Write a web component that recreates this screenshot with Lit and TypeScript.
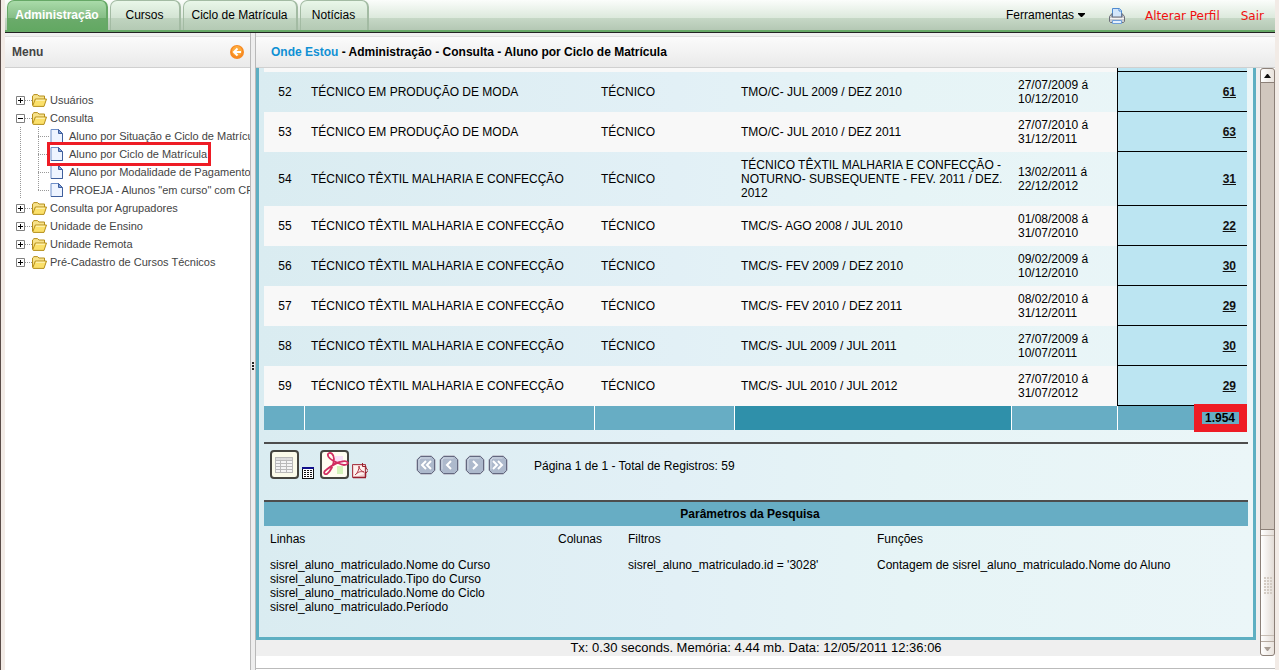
import { LitElement, html, svg, css } from "lit";
import { customElement, property } from "lit/decorators.js";
import { classMap } from "lit/directives/class-map.js";

interface Row {
  n: number;
  curso: string;
  tipo: string;
  ciclo: string;
  de: string;
  ate: string;
  total: number;
}

const MODA = "TÉCNICO EM PRODUÇÃO DE MODA";
const TEXTIL = "TÉCNICO TÊXTIL MALHARIA E CONFECÇÃO";
const T = "TÉCNICO";

const ROWS: Row[] = [
  { n: 52, curso: MODA, tipo: T, ciclo: "TMO/C- JUL 2009 / DEZ 2010", de: "27/07/2009", ate: "10/12/2010", total: 61 },
  { n: 53, curso: MODA, tipo: T, ciclo: "TMO/C- JUL 2010 / DEZ 2011", de: "27/07/2010", ate: "31/12/2011", total: 63 },
  { n: 54, curso: TEXTIL, tipo: T, ciclo: "TÉCNICO TÊXTIL MALHARIA E CONFECÇÃO - NOTURNO- SUBSEQUENTE - FEV. 2011 / DEZ. 2012", de: "13/02/2011", ate: "22/12/2012", total: 31 },
  { n: 55, curso: TEXTIL, tipo: T, ciclo: "TMC/S- AGO 2008 / JUL 2010", de: "01/08/2008", ate: "31/07/2010", total: 22 },
  { n: 56, curso: TEXTIL, tipo: T, ciclo: "TMC/S- FEV 2009 / DEZ 2010", de: "09/02/2009", ate: "10/12/2010", total: 30 },
  { n: 57, curso: TEXTIL, tipo: T, ciclo: "TMC/S- FEV 2010 / DEZ 2011", de: "08/02/2010", ate: "31/12/2011", total: 29 },
  { n: 58, curso: TEXTIL, tipo: T, ciclo: "TMC/S- JUL 2009 / JUL 2011", de: "27/07/2009", ate: "10/07/2011", total: 30 },
  { n: 59, curso: TEXTIL, tipo: T, ciclo: "TMC/S- JUL 2010 / JUL 2012", de: "27/07/2010", ate: "31/07/2012", total: 29 },
];

@customElement("app-tabs")
class AppTabs extends LitElement {
  static styles = css`
    :host { display: block; }
    .bar {
      display: flex; align-items: flex-start; height: 33px; box-sizing: border-box;
      padding-left: 2px; border-bottom: 1px solid #222;
      background: linear-gradient(#66a866, #66a866) 0 100% / 100% 2px no-repeat,
        linear-gradient(#fbfdfb 0, #dce9dc 18px, #c6d8c6 18px, #b4c8b4 30px);
      font: 12px/14px "Liberation Sans", Arial, sans-serif;
    }
    .tabs { display: flex; gap: 2px; }
    .tab {
      height: 30px; box-sizing: border-box; padding: 7px 8px 0 7px; color: #000; text-decoration: none;
      border: 1px solid #a3bba3; border-width: 1px 2px 0 1px; border-radius: 7px 7px 0 0; text-align: center;
      background: linear-gradient(#e9f7e9 0, #d3e3d3 17px, #c0d4c0 17px, #b3c9b3 30px);
      white-space: nowrap;
    }
    .t0 { width: 101px; } .t1 { width: 71px; } .t2 { width: 115px; } .t3 { width: 69px; }
    .active {
      color: #fff; font-weight: bold; border-color: #66a866; height: 31px; padding-left: 6px; padding-right: 6px;
      background: linear-gradient(#a9dba9 0, #86bd86 17px, #6bab6b 17px, #62a862 30px);
    }
    .tools { margin-left: auto; display: flex; align-items: flex-start; padding-right: 11px; }
    .menu {
      border: 0; background: none; padding: 8px 0 0; font: inherit; color: #000;
      display: flex; align-items: center; gap: 4px; margin-right: 24px;
    }
    .print { border: 0; background: none; padding: 8px 0 0; margin-right: 20px; }
    .red { color: #f01010; text-decoration: none; font: 12px/14px "DejaVu Sans", Verdana, sans-serif; padding-top: 9px; }
    .perfil { margin-right: 21px; }
    svg { display: block; }
  `;
  render() {
    const tabs = ["Administração", "Cursos", "Ciclo de Matrícula", "Notícias"];
    return html`<header class="bar">
      <nav class="tabs">
        ${tabs.map((t, i) => html`<a href="#" class=${classMap({ tab: true, ["t" + i]: true, active: i === 0 })}>${t}</a>`)}
      </nav>
      <div class="tools">
        <button class="menu">Ferramentas
          <svg width="7" height="4" viewBox="0 0 7 4"><path d="M0 0h7v1L4 4H3L0 1z" fill="#000" /></svg>
        </button>
        <button class="print" aria-label="Imprimir">
          <svg width="16" height="16" viewBox="0 0 16 16">
            <path d="M3.500 .5h7l2 2V10h-9z" fill="#d3e6fb" stroke="#4f8ad0" />
            <path d="M10 .5v2.500h2.500" fill="#fff" stroke="#4f8ad0" />
            <path d="M3 5.500L.5 8.500v5l1 1h13l1-1v-5L13 5.500V9H3z" fill="#c9cbd0" stroke="#6c6f78" />
            <path d="M1 10.500h14" stroke="#f4f4f4" />
            <path d="M3.500 12.500h9v3h-9z" fill="#e4effc" stroke="#6f9fd8" />
          </svg>
        </button>
        <a href="#" class="red perfil">Alterar Perfil</a>
        <a href="#" class="red">Sair</a>
      </div>
    </header>`;
  }
}

@customElement("app-tree")
class AppTree extends LitElement {
  static styles = css`
    :host { display: block; overflow: hidden; }
    ul { list-style: none; margin: 0; padding: 0; }
    .root { padding: 23px 0 0 11px; font: 11px/18px "Liberation Sans", Arial, sans-serif; }
    .line { display: flex; align-items: center; height: 18px; white-space: nowrap; }
    a { color: #444; text-decoration: none; }
    .exp { width: 9px; height: 9px; padding: 0; border: 0; background: none; flex: none; }
    .dots { width: 7px; height: 1px; background: repeating-linear-gradient(90deg, #999 0 1px, transparent 1px 2px); flex: none; }
    svg { display: block; flex: none; }
    .folder { margin-right: 3px; }
    .kids {
      margin-left: 4px; padding-left: 18px;
      background: repeating-linear-gradient(#999 0 1px, transparent 1px 2px) 0 0 / 1px 100% no-repeat,
        repeating-linear-gradient(#999 0 1px, transparent 1px 2px) 18px 0 / 1px 63px no-repeat;
    }
    .kids .dots { width: 12px; }
    .page { margin-right: 5px; }
    .leaf { position: relative; }
    .marked::after { content: ""; position: absolute; left: 9px; top: -3px; width: 158px; height: 18px; border: 3px solid #ee1c25; z-index: 1; }
  `;
  private node(label: string, open = false) {
    return html`<div class="line">
      <button class="exp" aria-label=${(open ? "Fechar " : "Abrir ") + label}>
        <svg width="9" height="9" viewBox="0 0 9 9">
          <path d="M.5 .5h8v8h-8z" fill="#fff" stroke="#808080" />
          <path d=${open ? "M2 4.500h5" : "M2 4.500h5M4.500 2v5"} stroke="#000" />
        </svg>
      </button>
      <span class="dots"></span>
      <svg class="folder" width="15" height="13" viewBox="0 0 15 13">
        <path d="M.5 11V2L2 .6h3.500L7 2h5.500v3" fill="#f7e28a" stroke="#b58e1c" />
        <path d="M.7 12L3.300 5H14.500L12 12.400H1.200z" fill="#fbe06a" stroke="#b58e1c" />
        <path d="M3.900 6.200h9" stroke="#fff6c4" />
      </svg>
      <a href="#">${label}</a>
    </div>`;
  }
  private leaf(label: string, marked = false) {
    return html`<li class=${classMap({ line: true, leaf: true, marked })}>
      <span class="dots"></span>
      <svg class="page" width="14" height="14" viewBox="0 0 14 14">
        <path d="M1 .5h7.500l4 4v9H1z" fill="#eef4ff" stroke="#6f8fc8" />
        <path d="M8.500 .5v4h4z" fill="#7fa0dc" stroke="#3f5f9c" />
        <path d="M1 13.500h11.500V5" fill="none" stroke="#3f5f9c" />
      </svg>
      <a href="#">${label}</a>
    </li>`;
  }
  render() {
    return html`<ul class="root">
      <li>${this.node("Usuários")}</li>
      <li>${this.node("Consulta", true)}
        <ul class="kids">
          ${this.leaf("Aluno por Situação e Ciclo de Matrícula")}
          ${this.leaf("Aluno por Ciclo de Matrícula", true)}
          ${this.leaf("Aluno por Modalidade de Pagamento")}
          ${this.leaf('PROEJA - Alunos "em curso" com CPF')}
        </ul>
      </li>
      ${["Consulta por Agrupadores", "Unidade de Ensino", "Unidade Remota", "Pré-Cadastro de Cursos Técnicos"].map(
        (l) => html`<li>${this.node(l)}</li>`
      )}
    </ul>`;
  }
}

@customElement("app-report")
class AppReport extends LitElement {
  @property({ attribute: false }) rows: Row[] = [];
  static styles = css`
    :host { display: block; font: 12px/14px "Liberation Sans", Arial, sans-serif; color: #000; }
    .panel {
      border: 3px solid #5eafc2; border-top: 0; padding: 0 5px 23px;
      background: linear-gradient(90deg, #daecf1 0, #e2f0f6 42%, #e6f4f6 65%, #ebf6f8 100%);
    }
    table { border-collapse: separate; border-spacing: 0; table-layout: fixed; width: 100%; border-right: 1px solid transparent; }
    .c0 { width: 40px; } .c1 { width: 290px; } .c2 { width: 140px; } .c4 { width: 106px; } .c5 { width: 130px; }
    td { padding: 6px 6px 6px 7px; height: 28px; vertical-align: middle; }
    .odd td { background: #f8f8f8; }
    .cut td { height: 4px; padding: 0; }
    td.num { text-align: center; padding: 6px 0 6px 2px; }
    .even .val, .odd .val, .cut .val {
      background: #bce5f2; border-left: 1px solid #000; border-bottom: 1px solid #000;
      text-align: right; padding: 6px 11px 5px 6px; font-weight: bold;
    }
    .cut .val { height: 3px; padding: 0; }
    .val a { color: #111; }
    .sum td { background: #67adc4; height: 24px; padding: 0 12px 0 0; border-left: 1px solid #fff; font-weight: bold; text-align: right; }
    .sum .first { border-left: 0; }
    .sum .dark { background: #2f90aa; }
    .total { position: relative; }
    .total::after { content: ""; position: absolute; right: 0; top: -2px; width: 37px; height: 12px; border: 8px solid #ee1c25; }
    .tools {
      margin-top: 12px; border-top: 2px solid #4d4d4d; height: 58px; padding: 6px 6px 0;
      box-sizing: border-box; display: flex; align-items: flex-start;
    }
    .tools svg { display: block; }
    button { padding: 0; border: 0; background: none; }
    .exports { display: flex; align-items: flex-end; gap: 3px; width: 146px; }
    .pdf { margin-left: 3px; }
    .pager { display: flex; gap: 3px; padding-top: 5px; width: 118px; }
    .next { margin-left: 3px; }
    .info { padding-top: 9px; }
    h2 {
      margin: 0; border-top: 2px solid #4d4d4d; background: #67adc4; font: bold 12px/24px "Liberation Sans", Arial, sans-serif;
      text-align: center; padding-right: 12px;
    }
    .params { display: grid; grid-template-columns: 288px 70px 249px 1fr; padding: 6px 6px 0; row-gap: 12px; }
    .status { background: #efefef; text-align: center; font: 13px/16px "Liberation Sans", Arial, sans-serif; }
  `;
  private pageButton(label: string, d: string, cls = "") {
    return html`<button class=${cls} aria-label=${label}>
      <svg width="20" height="20" viewBox="0 0 20 20">
        <path d="M5 0h10l5 5v10l-5 5H5l-5-5V5z" fill="#c3c7d2" />
        <path d="M4.500 1.500h11l3 3v11l-3 3h-11l-3-3v-11z" fill="#adb9cc" stroke="#63687f" />
        <path d="M3 14.500V5l2-2h9.500" fill="none" stroke="#d3dae6" />
        <path d=${d} fill="none" stroke="#fff" stroke-width="2" />
      </svg>
    </button>`;
  }
  render() {
    const grid = [0, 1, 2, 3, 4];
    return html`<div class="panel">
        <table>
          <colgroup>${[0, 1, 2, 3, 4, 5].map((i) => html`<col class="c${i}" />`)}</colgroup>
          <tbody>
            <tr class="cut odd" aria-hidden="true"><td colspan="5"></td><td class="val"></td></tr>
            ${this.rows.map(
              (r) => html`<tr class=${r.n % 2 ? "odd" : "even"}>
                <td class="num">${r.n}</td>
                <td>${r.curso}</td>
                <td>${r.tipo}</td>
                <td>${r.ciclo}</td>
                <td>${r.de} á<br />${r.ate}</td>
                <td class="val"><a href="#">${r.total}</a></td>
              </tr>`
            )}
          </tbody>
          <tfoot>
            <tr class="sum">
              <td class="first"></td><td></td><td></td><td class="dark"></td><td></td>
              <td class="total">1.954</td>
            </tr>
          </tfoot>
        </table>
        <div class="tools">
          <div class="exports">
            <button aria-label="Exportar planilha">
              <svg width="29" height="29" viewBox="0 0 29 29">
                <rect x="1" y="1" width="27" height="27" rx="3" fill="#fbfbea" stroke="#45453f" stroke-width="2" />
                <rect x="5" y="7" width="18" height="16" fill="#b9b9b9" />
                <path d="M6 8h16v2H6z" fill="#d8d8d8" />
                ${grid.map((i) => svg`<path d=${`M6 ${9 + i * 3}h4M11 ${9 + i * 3}h5M17 ${9 + i * 3}h5`} stroke=${i ? "#f4f4f4" : "#dcdcdc"} stroke-width="2" />`)}
              </svg>
            </button>
            <button aria-label="Planilha">
              <svg width="12" height="12" viewBox="0 0 12 12">
                <path d="M0 0h12v12H0z" fill="#111" /><path d="M0 0h12v2H0z" fill="#10108c" />
                <path d="M1 2h10v9H1z" fill="#fff" />
                <path d="M2 3.500h8M2 5.500h8M2 7.500h8M2 9.500h8" stroke="#111" stroke-dasharray="2 1" />
              </svg>
            </button>
            <button class="pdf" aria-label="Exportar PDF">
              <svg width="29" height="29" viewBox="0 0 29 29">
                <rect x="1" y="1" width="27" height="27" rx="3" fill="#fffdf0" stroke="#45453f" stroke-width="2" />
                <path d="M15 6h8v8h-8z" fill="#f8def6" /><path d="M17 16h6v8h-6z" fill="#d4f4ba" />
                <path d="M18 13C11 10 7 7 8 4c2-3 6 0 6 5 0 6-4 13-7 15-3 1-4-2-1-4 4-3 9-7 14-8 9-3 10 3 4 3-2 0-4-1-6-2" fill="none" stroke="#d22d61" stroke-width="1.800" />
              </svg>
            </button>
            <button aria-label="PDF">
              <svg width="16" height="16" viewBox="0 0 16 16">
                <path d="M.5 1.500h13v13H.5z" fill="#f0cfcf" stroke="#a83a48" />
                <path d="M2 3h10v8L6 13H2z" fill="#fff0ee" />
                <path d="M3 12c3-2 4-6 4-9 0 3 2 5 5 6-4-1-6 0-9 3" fill="none" stroke="#b33a48" />
                <path d="M10.500 0v3.500H14V5l2 2.500-2 2.500" fill="none" stroke="#98202c" />
                <path d="M1 14.500h13M13.500 9v5" stroke="#981c2c" stroke-width="1.500" />
              </svg>
            </button>
          </div>
          <div class="pager">
            ${this.pageButton("Primeira", "M10 6L6 10l4 4M15 6l-4 4 4 4")}
            ${this.pageButton("Anterior", "M12 6L8 10l4 4")}
            ${this.pageButton("Próxima", "M8 6l4 4-4 4", "next")}
            ${this.pageButton("Última", "M5 6l4 4-4 4M10 6l4 4-4 4")}
          </div>
          <span class="info">Página 1 de 1 - Total de Registros: 59</span>
        </div>
        <h2>Parâmetros da Pesquisa</h2>
        <div class="params">
          <span>Linhas</span><span>Colunas</span><span>Filtros</span><span>Funções</span>
          <span>sisrel_aluno_matriculado.Nome do Curso<br />sisrel_aluno_matriculado.Tipo do Curso<br />sisrel_aluno_matriculado.Nome do Ciclo<br />sisrel_aluno_matriculado.Período</span>
          <span></span>
          <span>sisrel_aluno_matriculado.id = '3028'</span>
          <span>Contagem de sisrel_aluno_matriculado.Nome do Aluno</span>
        </div>
      </div>
      <div class="status">Tx: 0.30 seconds. Memória: 4.44 mb. Data: 12/05/2011 12:36:06</div>`;
  }
}

@customElement("app-root")
class AppRoot extends LitElement {
  static styles = css`
    :host {
      display: flex; flex-direction: column; height: 100vh; box-sizing: border-box; overflow: hidden;
      border-left: 1px solid #5a4c48; padding: 0 4px; background: #f2ebe6;
      font: 12px/14px "Liberation Sans", Arial, sans-serif;
    }
    .body { flex: 1; min-height: 0; display: grid; grid-template-columns: 245px 6px 1fr; background: #fff; }
    .side { display: flex; flex-direction: column; min-width: 0; }
    .split {
      box-sizing: border-box; border: 1px solid #b9b9b9; border-width: 0 1px; background: #eee;
      display: flex; align-items: center; justify-content: center; padding-top: 28px;
    }
    .main { display: flex; flex-direction: column; min-width: 0; min-height: 0; }
    .head {
      box-sizing: border-box; height: 35px; flex: none; display: flex; align-items: center; font-weight: bold;
      border-top: 3px solid #f0f0f0; border-bottom: 1px solid #d0d0d0; background: linear-gradient(#e0e0e0 0 1px, #fbfbfb 1px, #eaeaea);
    }
    .mhead { color: #444; justify-content: space-between; padding: 0 6px 0 7px; }
    .crumb { padding: 0 15px; }
    .crumb a { color: #1090d4; text-decoration: none; }
    .crumb span { white-space: pre; }
    .collapse { border: 0; background: none; padding: 0; }
    svg { display: block; }
    .view { display: flex; flex: 1; min-height: 0; margin-bottom: 12px; }
    .scroll { flex: 1; min-width: 0; overflow: hidden; background: #efefef; padding-right: 4px; }
    .rail { width: 15px; display: flex; flex-direction: column; box-sizing: border-box; background: #d1c7be; border: 1px solid #8c8078; border-radius: 3px; }
    .rail button { flex: none; box-sizing: border-box; height: 14px; padding: 0; border: 0 solid #8c8078; display: grid; place-items: center; background: linear-gradient(90deg, #fff, #e9e3dd); }
    .rail .up { border-bottom-width: 1px; border-radius: 3px 3px 0 0; }
    .rail .down { border-top: 1px solid #b5aaa0; border-radius: 0 0 3px 3px; }
    .track { flex: 1; }
    .thumb {
      height: 112px; box-sizing: border-box; border-top: 1px solid #8c8078; display: grid; place-items: center;
      background: linear-gradient(#c8beb5, #c8beb5) 0 5px / 100% 1px no-repeat,
        linear-gradient(#c8beb5, #c8beb5) 0 105px / 100% 1px no-repeat, linear-gradient(90deg, #fff, #e3dcd6);
    }
    .base { height: 1px; border-top: 1px solid #bbb; background: #fff; flex: none; }
  `;
  render() {
    return html`<app-tabs></app-tabs>
      <div class="body">
        <aside class="side">
          <div class="head mhead">Menu
            <button class="collapse" aria-label="Recolher menu">
              <svg width="14" height="14" viewBox="0 0 14 14">
                <circle cx="7" cy="7" r="7" fill="#f78a22" /><circle cx="7" cy="6" r="5" fill="#fda93c" />
                <path d="M7.500 3.500L4 7l3.500 3.500M4 7h7" fill="none" stroke="#fff" stroke-width="2" />
              </svg>
            </button>
          </div>
          <app-tree></app-tree>
        </aside>
        <div class="split">
          <svg width="2" height="8" viewBox="0 0 2 8"><path d="M1 0v8" stroke="#222" stroke-width="2" stroke-dasharray="2 1" /></svg>
        </div>
        <main class="main">
          <div class="head crumb"><a href="#">Onde Estou</a><span> - Administração - Consulta - Aluno por Ciclo de Matrícula</span></div>
          <div class="view">
            <div class="scroll"><app-report .rows=${ROWS}></app-report></div>
            <div class="rail">
              <button class="up" aria-label="Subir"><svg width="7" height="4" viewBox="0 0 7 4"><path d="M3 0h1l3 4H0z" fill="#111" /></svg></button>
              <div class="track"></div>
              <div class="thumb">
                <svg width="8" height="18" viewBox="0 0 8 18">
                  <path d="M1 0v18M4 0v18M7 0v18" stroke="#d3cbc3" stroke-width="2" stroke-dasharray="2 1" />
                </svg>
              </div>
              <button class="down" aria-label="Descer"><svg width="7" height="4" viewBox="0 0 7 4"><path d="M0 0h7L4 4H3z" fill="#a89e95" /></svg></button>
            </div>
          </div>
          <div class="base"></div>
        </main>
      </div>`;
  }
}
